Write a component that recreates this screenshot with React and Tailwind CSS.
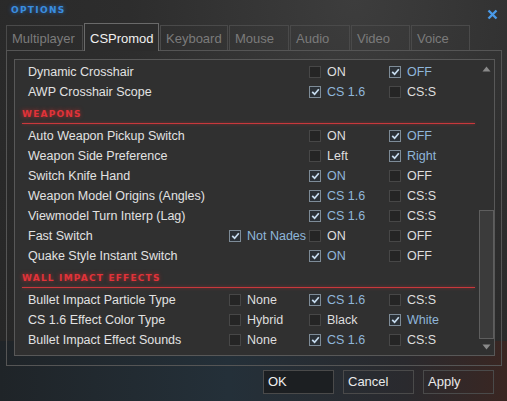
import React from "react";

const F = { fontFamily: '"Liberation Sans", Arial, sans-serif' };

function Box({ checked }) {
  return checked ? (
    <span className="w-[12px] h-[12px] border border-[#7d8b97] bg-[#2b3137] flex items-center justify-center shrink-0">
      <svg width="9" height="8" viewBox="0 0 9 8">
        <path d="M1.2 3.8 L3.6 6.2 L7.8 1.2" stroke="#c6dbee" strokeWidth="1.7" fill="none" />
      </svg>
    </span>
  ) : (
    <span className="w-[12px] h-[12px] border border-[#474747] bg-[#252525] shrink-0" />
  );
}

function Opt({ o }) {
  if (!o) return <div className="w-[80px]" />;
  return (
    <div className="w-[80px] flex items-center gap-[6px]">
      <Box checked={o[1]} />
      <span className={o[1] ? "text-[#8fb6da]" : "text-[#dedede]"}>{o[0]}</span>
    </div>
  );
}

function Row({ label, opts }) {
  return (
    <div className="h-[20px] flex items-center pl-[13px]">
      <div className="w-[201px] text-[#e2e2e2]">{label}</div>
      {opts.map((o, i) => (
        <Opt key={i} o={o} />
      ))}
    </div>
  );
}

function Header({ text }) {
  return (
    <div className="h-[24px] pl-[7px] flex flex-col justify-end">
      <div
        className="text-[9px] font-bold tracking-[1.2px] text-[#e0333a] leading-[9px] [text-shadow:0_0_4px_rgba(230,40,40,0.7)]"
        style={{ fontFamily: '"DejaVu Sans", sans-serif' }}
      >
        {text}
      </div>
      <div className="mt-[4px] mb-[2px] h-[1px] w-[453px] bg-[#c8383c] [box-shadow:0_0_3px_rgba(230,50,50,0.6)]" />
    </div>
  );
}

const tabs = [
  ["Multiplayer", 77],
  ["CSPromod", 75],
  ["Keyboard", 68],
  ["Mouse", 60],
  ["Audio", 60],
  ["Video", 59],
  ["Voice", 59],
];

export default function App() {
  const ON = (t, c) => [t, c];
  return (
    <div
      className="w-[507px] h-[401px] relative overflow-hidden text-[12.5px] bg-[#2a2a2a]"
      style={F}
    >
      <div className="absolute inset-0 bg-[radial-gradient(ellipse_at_70%_0%,#3d3d3d_0%,#2d2d2d_45%,#262626_100%)]" />
      <div className="absolute left-0 right-0 bottom-0 h-[60px] bg-[linear-gradient(90deg,#1f2428_0%,#243039_45%,#2a2a2e_80%,#3a2622_100%)]" />
      <div className="relative flex flex-col">
        {/* title */}
        <div className="h-[23px] flex items-center justify-between pl-[11px] pr-[9px]">
          <span
            className="text-[9px] font-bold tracking-[1.3px] text-[#3a8ee0] [text-shadow:0_0_4px_rgba(40,120,220,0.7)] mt-[-2px]"
            style={{ fontFamily: '"DejaVu Sans", sans-serif' }}
          >
            OPTIONS
          </span>
          <svg width="11" height="11" viewBox="0 0 11 11" className="mt-[6px]">
            <path d="M1.5 1.5 L9.5 9.5 M9.5 1.5 L1.5 9.5" stroke="#4a9ae8" strokeWidth="2.4" />
          </svg>
        </div>
        {/* tabs */}
        <div className="h-[27px] flex items-end pl-[6px] gap-[1px] relative z-10">
          {tabs.map(([t, w]) =>
            t === "CSPromod" ? (
              <div
                key={t}
                className="h-[28px] mb-[-1px] border border-b-0 border-[#6a6a6a] bg-[#2c2c2c] text-[#f0f0f0] pl-[5px] pt-[5px] text-[13px]"
                style={{ width: w }}
              >
                {t}
              </div>
            ) : (
              <div
                key={t}
                className="h-[25px] border border-b-0 border-[#4a4a4a] text-[#7b7b7b] pl-[5px] pt-[3px] text-[13px]"
                style={{ width: w }}
              >
                {t}
              </div>
            )
          )}
        </div>
        {/* frame */}
        <div className="ml-[6px] w-[496px] h-[316px] border border-[#555] pl-[7px] pt-[8px]">
          <div className="w-[481px] h-[297px] border border-[#585858] bg-[#303030] flex">
            <div className="flex-1 pt-[2px]">
              <Row label="Dynamic Crosshair" opts={[null, ON("ON", false), ON("OFF", true)]} />
              <Row label="AWP Crosshair Scope" opts={[null, ON("CS 1.6", true), ON("CS:S", false)]} />
              <Header text="WEAPONS" />
              <Row label="Auto Weapon Pickup Switch" opts={[null, ON("ON", false), ON("OFF", true)]} />
              <Row label="Weapon Side Preference" opts={[null, ON("Left", false), ON("Right", true)]} />
              <Row label="Switch Knife Hand" opts={[null, ON("ON", true), ON("OFF", false)]} />
              <Row label="Weapon Model Origins (Angles)" opts={[null, ON("CS 1.6", true), ON("CS:S", false)]} />
              <Row label="Viewmodel Turn Interp (Lag)" opts={[null, ON("CS 1.6", true), ON("CS:S", false)]} />
              <Row label="Fast Switch" opts={[ON("Not Nades", true), ON("ON", false), ON("OFF", false)]} />
              <Row label="Quake Style Instant Switch" opts={[null, ON("ON", true), ON("OFF", false)]} />
              <Header text="WALL IMPACT EFFECTS" />
              <Row label="Bullet Impact Particle Type" opts={[ON("None", false), ON("CS 1.6", true), ON("CS:S", false)]} />
              <Row label="CS 1.6 Effect Color Type" opts={[ON("Hybrid", false), ON("Black", false), ON("White", true)]} />
              <Row label="Bullet Impact Effect Sounds" opts={[ON("None", false), ON("CS 1.6", true), ON("CS:S", false)]} />
            </div>
            {/* scrollbar */}
            <div className="w-[15px] flex flex-col items-center">
              <svg width="9" height="6" viewBox="0 0 9 6" className="mt-[6px]">
                <path d="M0.5 5.5 L4.5 0.5 L8.5 5.5 Z" fill="#8a8a8a" />
              </svg>
              <div className="flex-1 w-full flex flex-col justify-end">
                <div className="w-[15px] h-[129px] border border-[#5e5e5e] bg-[#3b3b3b]" />
              </div>
              <svg width="9" height="6" viewBox="0 0 9 6" className="mt-[5px] mb-[5px]">
                <path d="M0.5 0.5 L8.5 0.5 L4.5 5.5 Z" fill="#8a8a8a" />
              </svg>
            </div>
          </div>
        </div>
        {/* buttons */}
        <div className="flex pl-[263px] gap-[9px] mt-[4px] text-[13px]">
          <div className="w-[71px] h-[24px] border border-[#4a4a4a] bg-[#1c1f22] text-[#f0f0f0] pl-[4px] flex items-center">OK</div>
          <div className="w-[71px] h-[24px] border border-[#4a4a4a] text-[#eaeaea] pl-[4px] flex items-center">Cancel</div>
          <div className="w-[71px] h-[24px] border border-[#4a4a4a] text-[#eaeaea] pl-[4px] flex items-center">Apply</div>
        </div>
      </div>
    </div>
  );
}
